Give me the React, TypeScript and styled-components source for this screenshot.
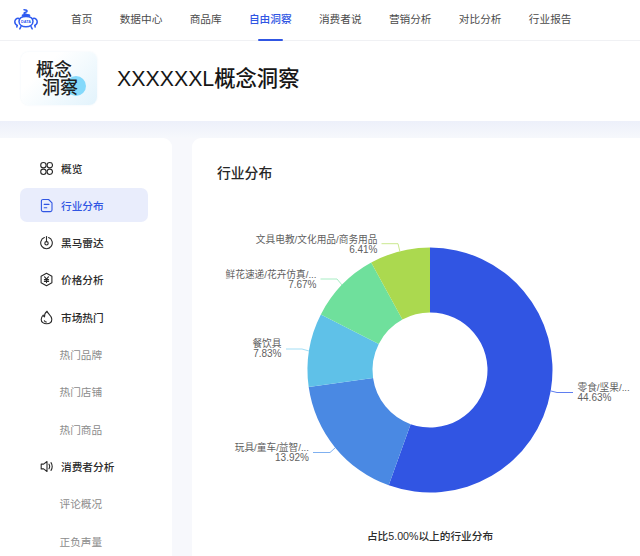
import styled, { createGlobalStyle } from "styled-components";
import { ReactNode } from "react";

const GlobalStyle = createGlobalStyle`
    html, body {
        margin: 0;
        padding: 0;
        height: 556px;
        overflow: hidden;
        background: #f7f8fc;
        font-family: "Liberation Sans", "Noto Sans CJK SC", sans-serif;
    }
`
const Page = styled.div`
    width: 640px;
    height: 556px;
    overflow: hidden;
`
const TopBar = styled.header`
    display: flex;
    align-items: stretch;
    height: 40px;
    background: white;
    border-bottom: 1px solid #f0f1f4;
    padding-left: 14px;
`
const Logo = styled.svg`
    width: 24px;
    height: 21px;
    margin-top: 9px;
    margin-right: 33px;
    flex: none;
`
const Nav = styled.nav`
    display: flex;
    gap: 27.33px;
`
const NavItem = styled.a<{ $active?: boolean }>`
    position: relative;
    font-size: 10.67px;
    line-height: 39px;
    color: ${(props) => (props.$active ? "#3056e3" : "#4b4b4b")};
    font-weight: ${(props) => (props.$active ? 500 : 400)};
    &::after {
        content: "";
        display: ${(props) => (props.$active ? "block" : "none")};
        position: absolute;
        left: 9px;
        right: 9px;
        bottom: -1px;
        height: 2.4px;
        border-radius: 1px;
        background: #3056e3;
    }
`
const Header = styled.div`
    display: flex;
    align-items: center;
    gap: 20px;
    height: 74px;
    padding: 0 0 6px 21px;
    background: white;
`
const Tile = styled.div`
    position: relative;
    width: 76px;
    height: 53px;
    border-radius: 8px;
    background: linear-gradient(135deg, #ffffff 30%, #e2f3fc 100%);
    box-shadow: 0 0 2px rgba(220, 235, 245, 0.6);
    font-size: 18px;
    font-weight: 500;
    line-height: 18.5px;
    color: #1f1f1f;
    padding: 9px 0 0 15px;
    box-sizing: border-box;
    &::before {
        content: "";
        position: absolute;
        left: 44.5px;
        top: 24px;
        width: 20px;
        height: 20px;
        border-radius: 50%;
        background: #84d9fb;
    }
`
const TileLine = styled.div<{ $indent?: boolean }>`
    position: relative;
    margin-left: ${(props) => (props.$indent ? "6px" : "0")};
`
const PageTitle = styled.h1`
    margin: 0 0 3px;
    font-size: 21.33px;
    font-weight: 500;
    color: #161616;
`
const Band = styled.div`
    height: 17px;
    background: linear-gradient(180deg, #edf0fa 0%, #f6f8fc 100%);
`
const Body = styled.div`
    display: flex;
    gap: 20px;
    align-items: flex-start;
`
const Sidebar = styled.aside`
    flex: none;
    width: 172px;
    height: 420px;
    box-sizing: border-box;
    padding: 13px 24px 0 20px;
    background: white;
    border-top-right-radius: 9px;
`
const MenuRow = styled.div<{ $active?: boolean }>`
    display: flex;
    align-items: center;
    gap: 8px;
    height: 34px;
    margin-bottom: 3.33px;
    padding-left: 20px;
    border-radius: 7px;
    font-size: 10.67px;
    font-weight: 500;
    color: ${(props) => (props.$active ? "#3056e3" : "#2b2b2b")};
    background: ${(props) => (props.$active ? "#e9edfc" : "transparent")};
`
const SubRow = styled.div`
    display: flex;
    align-items: center;
    height: 34px;
    margin-bottom: 3.33px;
    padding-left: 39.5px;
    font-size: 10.67px;
    color: #8b8b8b;
`
const MenuIcon = styled.svg`
    width: 13px;
    height: 15px;
    flex: none;
    fill: none;
    stroke: currentColor;
    stroke-width: 1.1;
    stroke-linecap: round;
    stroke-linejoin: round;
`
const Main = styled.main`
    flex: none;
    width: 476px;
    height: 420px;
    background: white;
    border-top-left-radius: 9px;
`
const SectionTitle = styled.h2`
    margin: 0;
    padding: 27px 0 0 25px;
    height: 35px;
    line-height: 18px;
    font-size: 13.8px;
    font-weight: 500;
    color: #262626;
`
const Chart = styled.svg`
    display: block;
    width: 476px;
    height: 318px;
    text {
        font-family: "Liberation Sans", "Noto Sans CJK SC", sans-serif;
        font-size: 9.7px;
        fill: #5f5f5f;
    }
    .percent {
        font-size: 10px;
    }
`
const Caption = styled.div`
    text-align: center;
    font-size: 10.67px;
    line-height: 14px;
    font-weight: 500;
    color: #2b2b2b;
    margin-top: 11px;
`

const navItems = ["首页", "数据中心", "商品库", "自由洞察", "消费者说", "营销分析", "对比分析", "行业报告"];

// cx / cy are in chart coords, chart starts at x=192 y=200 on the page
const cx = 238;
const cy = 170;
const outer = 122.5;
const inner = 57.5;

const slices = [
    { name: "零食/坚果/...", value: 44.63, color: "#3155e3", line: "#5f7ef0", anchor: "start", tx: 385.5, ty: 188, points: "359,191 365,192.5 381,192.5" },
    { name: "玩具/童车/益智/...", value: 13.92, color: "#4a89e3", line: "#7fb0f0", anchor: "end", tx: 117, ty: 248, points: "121,252.5 138,252.5 143,248" },
    { name: "餐饮具", value: 7.83, color: "#5fc1e8", line: "#a3def5", anchor: "end", tx: 89.5, ty: 144, points: "94,149 110,149 117,151" },
    { name: "鲜花速递/花卉仿真/...", value: 7.67, color: "#6fe09c", line: "#a8edc4", anchor: "end", tx: 124.5, ty: 75, points: "128.5,79 145,79 150,85" },
    { name: "文具电教/文化用品/商务用品", value: 6.41, color: "#abd94f", line: "#cbe88f", anchor: "end", tx: 185.5, ty: 40, points: "189.5,43.7 206,43.7 208,52" },
];
const total = slices.reduce((sum, s) => sum + s.value, 0);

function point(r: number, angle: number) {
    return `${cx + r * Math.sin(angle)} ${cy - r * Math.cos(angle)}`;
}

function slicePath(start: number, end: number) {
    const large = end - start > Math.PI ? 1 : 0;
    return `M${point(outer, start)} A${outer} ${outer} 0 ${large} 1 ${point(outer, end)} L${point(inner, end)} A${inner} ${inner} 0 ${large} 0 ${point(inner, start)} Z`;
}

function Donut() {
    let angle = 0;
    return (
        <Chart viewBox="0 0 476 318">
            {slices.map((s) => {
                const start = angle;
                angle += (s.value / total) * Math.PI * 2;
                return <path key={s.name} d={slicePath(start, angle)} fill={s.color} />;
            })}
            {slices.map((s) => (
                <g key={s.name}>
                    <polyline points={s.points} fill="none" stroke={s.line} strokeWidth="1" />
                    <text x={s.tx} y={s.ty + 3.4} textAnchor={s.anchor as "start" | "end"}>{s.name}</text>
                    <text className="percent" x={s.tx} y={s.ty + 12.8} textAnchor={s.anchor as "start" | "end"}>{s.value.toFixed(2)}%</text>
                </g>
            ))}
        </Chart>
    );
}

function RobotLogo() {
    return (
        <Logo viewBox="0 0 24 21" fill="none" stroke="#2f5bf0" strokeWidth="1.5" strokeLinecap="round">
            <path d="M10 0.8c2.2 0 3.4 0.6 3 1.6c-0.4 1-3 0.8-3 1.9c0 0.6 1 0.9 2 0.9" />
            <ellipse cx="12" cy="6.3" rx="3.6" ry="0.9" fill="#2f5bf0" />
            <path d="M5 12.5c0-3.4 3.2-5 7-5s7 1.6 7 5c0 3.2-3.2 5.2-7 5.2s-7-2-7-5.2z" />
            <path d="M5 9.5c-2.4-0.6-4.2 1-4.2 3.3c0 1.7 1 3 2.4 3.6" />
            <path d="M19 9.5c2.4-0.6 4.2 1 4.2 3.3c0 1.7-1 3-2.4 3.6" />
            <path d="M7 17.5l-1.2 2.4M17 17.5l1.2 2.4M3.2 16.4l-0.4 1.6M20.8 16.4l0.4 1.6" />
            <text x="12" y="13.6" textAnchor="middle" fontSize="3.8" fontWeight="700" fill="#2f5bf0" stroke="none" fontFamily="Liberation Sans, sans-serif">DATA</text>
        </Logo>
    );
}

const icons: Record<string, ReactNode> = {
    overview: (
        <>
            <circle cx="3.4" cy="4.2" r="2.7" />
            <circle cx="9.8" cy="4.2" r="2.7" />
            <circle cx="3.4" cy="10.8" r="2.7" />
            <circle cx="9.8" cy="10.8" r="2.7" />
        </>
    ),
    doc: (
        <>
            <path d="M3 1.5h5.6l3.4 3.4v7.1a1.6 1.6 0 0 1-1.6 1.6H3a1.6 1.6 0 0 1-1.6-1.6V3.1A1.6 1.6 0 0 1 3 1.5z" />
            <path d="M4.2 6.4h4.8M4.2 9.8h2.6" />
        </>
    ),
    radar: (
        <>
            <path d="M4.4 2.5a5.8 5.8 0 1 0 4.2 0" />
            <path d="M6.5 1.5v5" />
            <circle cx="6.5" cy="8.3" r="1.7" />
        </>
    ),
    price: (
        <>
            <path d="M6.5 1.2l5.4 3v6.6l-5.4 3-5.4-3V4.2z" />
            <path d="M4.6 4.8l1.9 2.4l1.9-2.4M4.4 7.6h4.2M4.4 9.4h4.2M6.5 7.2v3.4" />
        </>
    ),
    fire: (
        <>
            <path d="M7 1.2c0.4 2.4 4.8 4.2 4.8 8c0 2.9-2.3 4.6-5.2 4.6s-5.4-1.7-5.4-4.4c0-2 1-3.3 2-4.4c0.2 1 0.6 1.6 1.3 1.9c-0.1-2.2 0.7-4.4 2.5-5.7z" />
            <path d="M4.4 10.8c0.4 0.8 1.2 1.2 2 1.2" />
        </>
    ),
    voice: (
        <>
            <path d="M7 2.5v10l-3.4-2.6H1.2V5.1h2.4z" />
            <path d="M9 5.2c0.8 1.4 0.8 3.2 0 4.6M11 3.6c1.500 2.4 1.500 5.4 0 7.8" />
        </>
    ),
};

function Menu({ icon, label, active }: { icon: string; label: string; active?: boolean }) {
    return (
        <MenuRow $active={active}>
            <MenuIcon viewBox="0 0 13 15">{icons[icon]}</MenuIcon>
            {label}
        </MenuRow>
    );
}

export default function App() {
    return (
        <Page>
            <GlobalStyle />
            <TopBar>
                <RobotLogo />
                <Nav>
                    {navItems.map((item) => (
                        <NavItem key={item} $active={item === "自由洞察"}>{item}</NavItem>
                    ))}
                </Nav>
            </TopBar>
            <Header>
                <Tile>
                    <TileLine>概念</TileLine>
                    <TileLine $indent>洞察</TileLine>
                </Tile>
                <PageTitle>XXXXXXL概念洞察</PageTitle>
            </Header>
            <Band />
            <Body>
                <Sidebar>
                    <Menu icon="overview" label="概览" />
                    <Menu icon="doc" label="行业分布" active />
                    <Menu icon="radar" label="黑马雷达" />
                    <Menu icon="price" label="价格分析" />
                    <Menu icon="fire" label="市场热门" />
                    <SubRow>热门品牌</SubRow>
                    <SubRow>热门店铺</SubRow>
                    <SubRow>热门商品</SubRow>
                    <Menu icon="voice" label="消费者分析" />
                    <SubRow>评论概况</SubRow>
                    <SubRow>正负声量</SubRow>
                </Sidebar>
                <Main>
                    <SectionTitle>行业分布</SectionTitle>
                    <Donut />
                    <Caption>占比5.00%以上的行业分布</Caption>
                </Main>
            </Body>
        </Page>
    );
}
